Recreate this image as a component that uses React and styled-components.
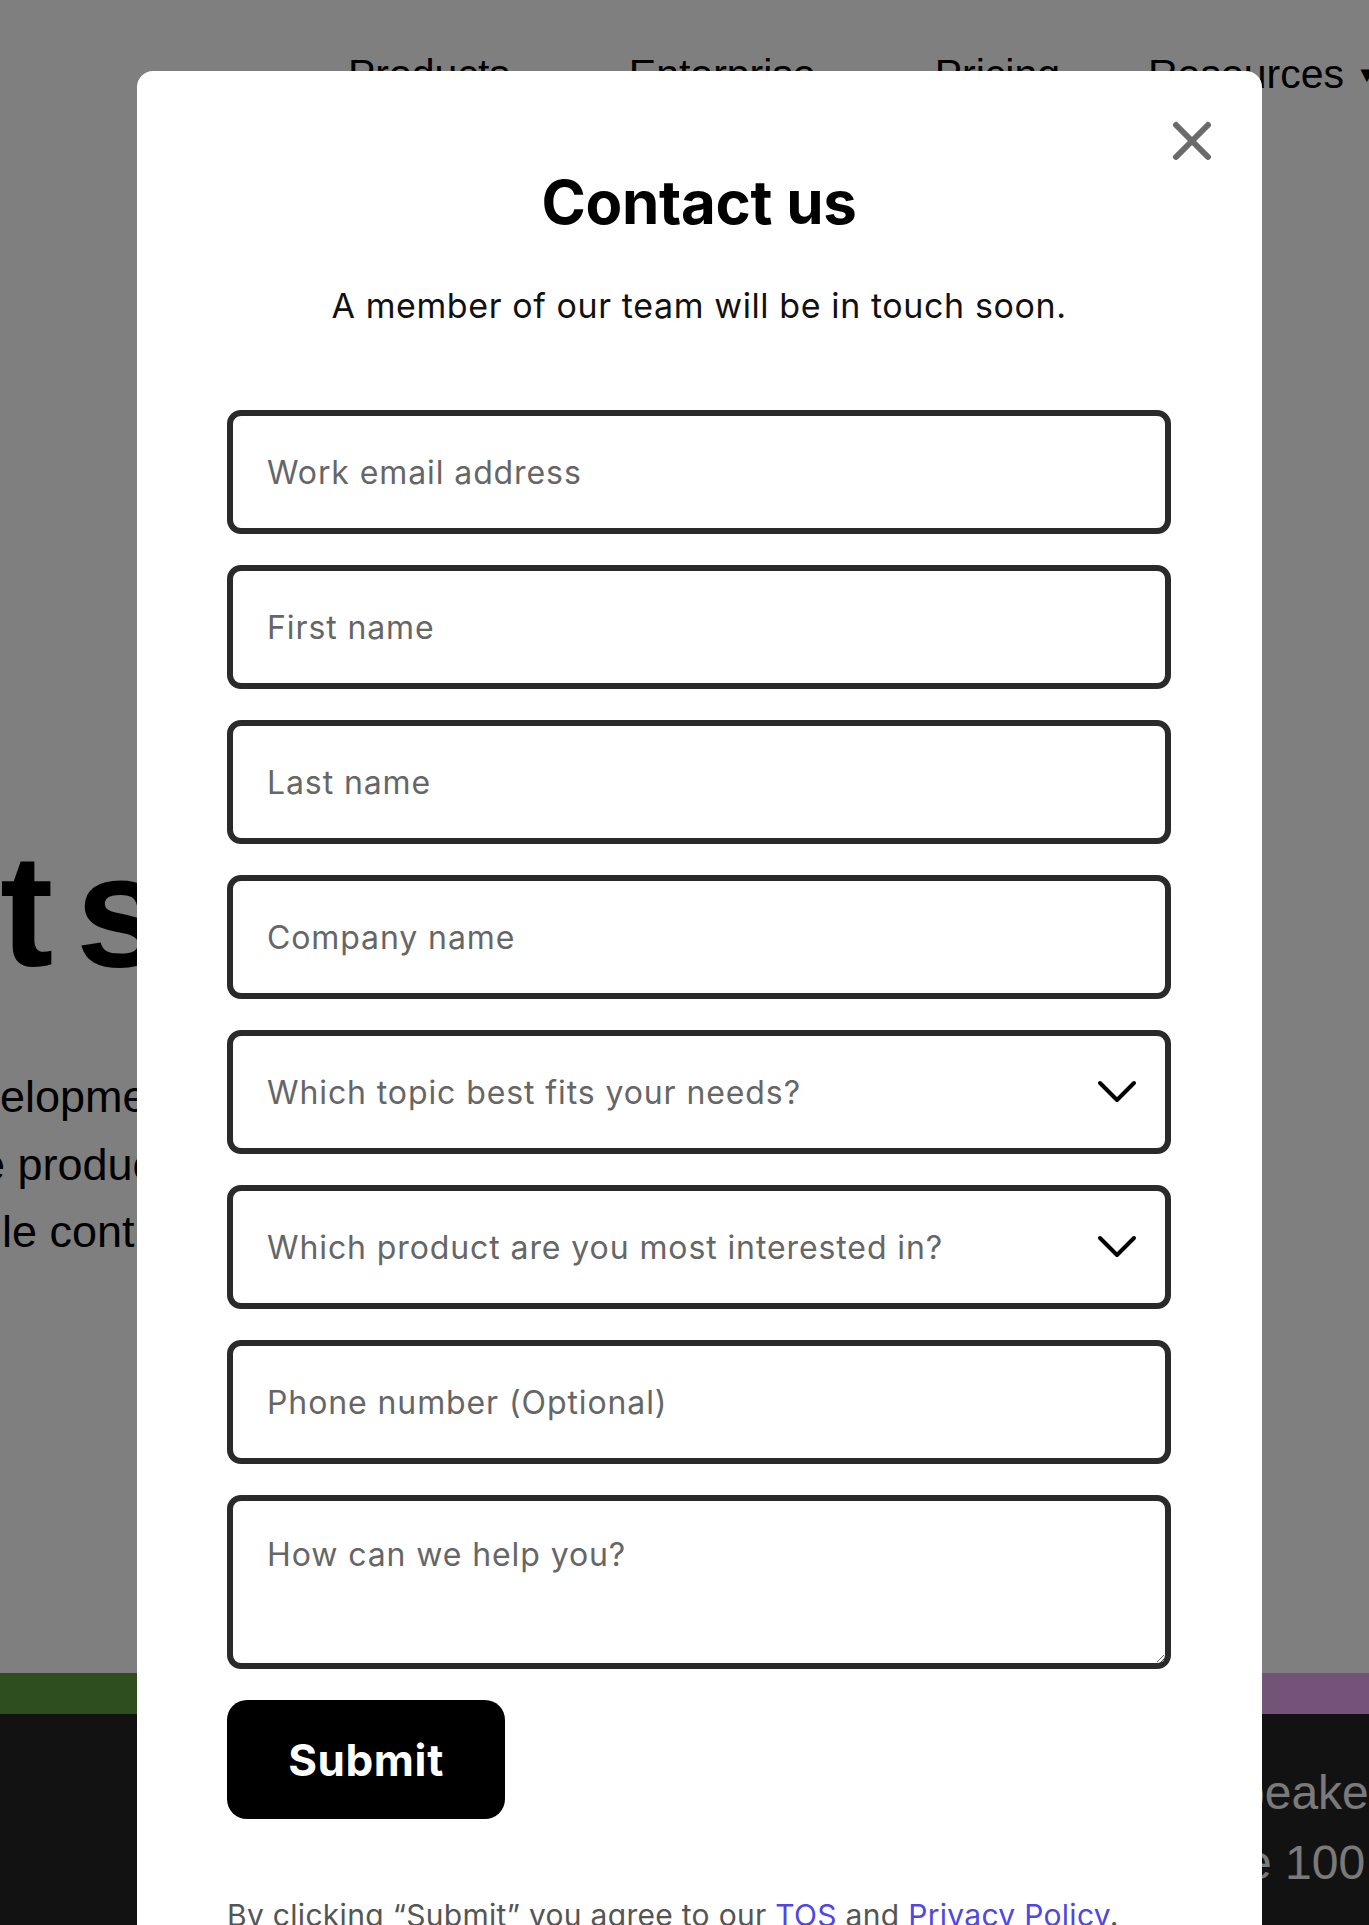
import React from "react";
import styled, { createGlobalStyle } from "styled-components";

const GlobalStyle = createGlobalStyle`
  html, body { margin: 0; padding: 0; }
  body {
    background: #ffffff;
    font-family: Inter, "Noto Sans", sans-serif;
    overflow: hidden;
  }
  * { box-sizing: border-box; }
`;

/* ---------- background page ---------- */
const Page = styled.div`
  position: relative;
  height: 1925px;
  overflow: hidden;
  background: #ffffff;
  font-family: "Liberation Sans", Arial, sans-serif;
  color: #000;
  display: flex;
  flex-direction: column;
`;

const Nav = styled.nav`
  display: flex;
  align-items: center;
  gap: 119px;
  padding: 51px 0 0 348px;
  font-size: 41px;
  line-height: 47px;
  white-space: nowrap;
`;

const NavItem = styled.span`
  display: inline-flex;
  align-items: center;
  gap: 12px;
  margin-left: ${(p) => p.$shift || 0}px;
`;

const Caret = styled.span`
  font-size: 22px;
`;

const Hero = styled.section`
  margin-top: 733px;
  display: flex;
  flex-direction: column;
`;

const HeroTitle = styled.h1`
  margin: 0;
  font-size: 160px;
  line-height: 160px;
  font-weight: 700;
  white-space: nowrap;
  letter-spacing: -2px;
  word-spacing: -18px;
`;

const HeroText = styled.p`
  margin: 72px 0 0;
  font-size: 45px;
  line-height: 67.5px;
  white-space: nowrap;
`;

const HeroLine = styled.span`
  display: block;
  margin-left: ${(p) => p.$indent || 0}px;
`;

const Band = styled.div`
  margin-top: 407px;
  height: 41px;
  background: linear-gradient(90deg, #5c9c3e 0 50%, #e6a8f0 50% 100%);
`;

const Dark = styled.section`
  flex: 1;
  background: #242424;
  padding: 44px 0 0 1205px;
  color: #f4f4f4;
  font-size: 48px;
  line-height: 70px;
  white-space: nowrap;
`;

/* ---------- modal ---------- */
const Overlay = styled.div`
  position: fixed;
  inset: 0;
  background: rgba(0, 0, 0, 0.5);
`;

const Modal = styled.div`
  position: absolute;
  top: 71px;
  left: 137px;
  width: 1125px;
  background: #ffffff;
  border-radius: 16px;
  padding: 95px 91px 80px 90px;
  display: flex;
  flex-direction: column;
  font-family: Inter, "Noto Sans", sans-serif;
`;

const CloseButton = styled.button`
  position: absolute;
  top: 50px;
  right: 50px;
  width: 40px;
  height: 40px;
  padding: 0;
  border: 0;
  background: transparent;
  cursor: pointer;
  display: flex;
`;

const Title = styled.h2`
  margin: 0;
  text-align: center;
  font-size: 60px;
  line-height: 72px;
  font-weight: 700;
  color: #000;
  letter-spacing: -0.3px;
`;

const Subtitle = styled.p`
  margin: 44px 0 0;
  text-align: center;
  font-size: 34px;
  line-height: 48px;
  letter-spacing: 0.6px;
  color: #111;
`;

const Form = styled.form`
  margin-top: 80px;
  display: flex;
  flex-direction: column;
  gap: 31px;
`;

const fieldBase = `
  width: 100%;
  border: 6px solid #2a2a2a;
  border-radius: 14px;
  background: #fff;
  font-family: Inter, "Noto Sans", sans-serif;
  font-size: 32px;
  letter-spacing: 0.9px;
  color: #222;
  outline: none;
  &::placeholder { color: #666; opacity: 1; }
`;

const Input = styled.input`
  ${fieldBase}
  height: 124px;
  padding: 0 34px;
`;

const SelectWrap = styled.div`
  position: relative;
`;

const Select = styled.select`
  ${fieldBase}
  height: 124px;
  padding: 0 90px 0 34px;
  appearance: none;
  -webkit-appearance: none;
  color: #666;
`;

const Chevron = styled.svg`
  position: absolute;
  right: 34px;
  top: 50%;
  width: 40px;
  height: 24px;
  transform: translateY(-50%);
  pointer-events: none;
`;

const TextArea = styled.textarea`
  ${fieldBase}
  height: 174px;
  padding: 32px 34px;
  line-height: 44px;
  resize: vertical;
`;

const SubmitButton = styled.button`
  align-self: flex-start;
  width: 278px;
  height: 119px;
  border: 0;
  border-radius: 20px;
  background: #000;
  color: #fff;
  font-family: Inter, "Noto Sans", sans-serif;
  font-size: 44px;
  font-weight: 700;
  letter-spacing: 0.6px;
  cursor: pointer;
`;

const Note = styled.p`
  margin: 74px 0 0;
  font-size: 30px;
  line-height: 44px;
  letter-spacing: 0.3px;
  color: #555;
`;

const Link = styled.a`
  color: #4f46e5;
  text-decoration: none;
`;

function ChevronIcon() {
  return (
    <Chevron viewBox="0 0 40 24" fill="none">
      <path d="M3 3 L20 20 L37 3" stroke="#000" strokeWidth="4" strokeLinecap="round" strokeLinejoin="round" />
    </Chevron>
  );
}

function CloseIcon() {
  return (
    <svg width="40" height="40" viewBox="0 0 40 40" fill="none">
      <path d="M4 4 L36 36 M36 4 L4 36" stroke="#6b6b6b" strokeWidth="6" strokeLinecap="round" />
    </svg>
  );
}

export default function App() {
  return (
    <>
      <GlobalStyle />
      <Page>
        <Nav>
          <NavItem>Products</NavItem>
          <NavItem>Enterprise</NavItem>
          <NavItem>Pricing</NavItem>
          <NavItem $shift={-31}>
            Resources <Caret>▼</Caret>
          </NavItem>
        </Nav>
        <Hero>
          <HeroTitle>t solutions</HeroTitle>
          <HeroText>
            <HeroLine $indent={0}>elopment teams</HeroLine>
            <HeroLine $indent={-20}>e products</HeroLine>
            <HeroLine $indent={2}>le control</HeroLine>
          </HeroText>
        </Hero>
        <Band />
        <Dark>
          <HeroLine $indent={9}>speakers</HeroLine>
          <HeroLine>the 100</HeroLine>
        </Dark>
      </Page>
      <Overlay>
        <Modal role="dialog" aria-label="Contact us">
          <CloseButton aria-label="Close">
            <CloseIcon />
          </CloseButton>
          <Title>Contact us</Title>
          <Subtitle>A member of our team will be in touch soon.</Subtitle>
          <Form onSubmit={(e) => e.preventDefault()}>
            <Input type="email" placeholder="Work email address" />
            <Input type="text" placeholder="First name" />
            <Input type="text" placeholder="Last name" />
            <Input type="text" placeholder="Company name" />
            <SelectWrap>
              <Select defaultValue="">
                <option value="" disabled>Which topic best fits your needs?</option>
              </Select>
              <ChevronIcon />
            </SelectWrap>
            <SelectWrap>
              <Select defaultValue="">
                <option value="" disabled>Which product are you most interested in?</option>
              </Select>
              <ChevronIcon />
            </SelectWrap>
            <Input type="tel" placeholder="Phone number (Optional)" />
            <TextArea placeholder="How can we help you?" />
            <SubmitButton type="submit">Submit</SubmitButton>
          </Form>
          <Note>
            By clicking “Submit” you agree to our <Link href="#">TOS</Link> and{" "}
            <Link href="#">Privacy Policy</Link>.
          </Note>
        </Modal>
      </Overlay>
    </>
  );
}
